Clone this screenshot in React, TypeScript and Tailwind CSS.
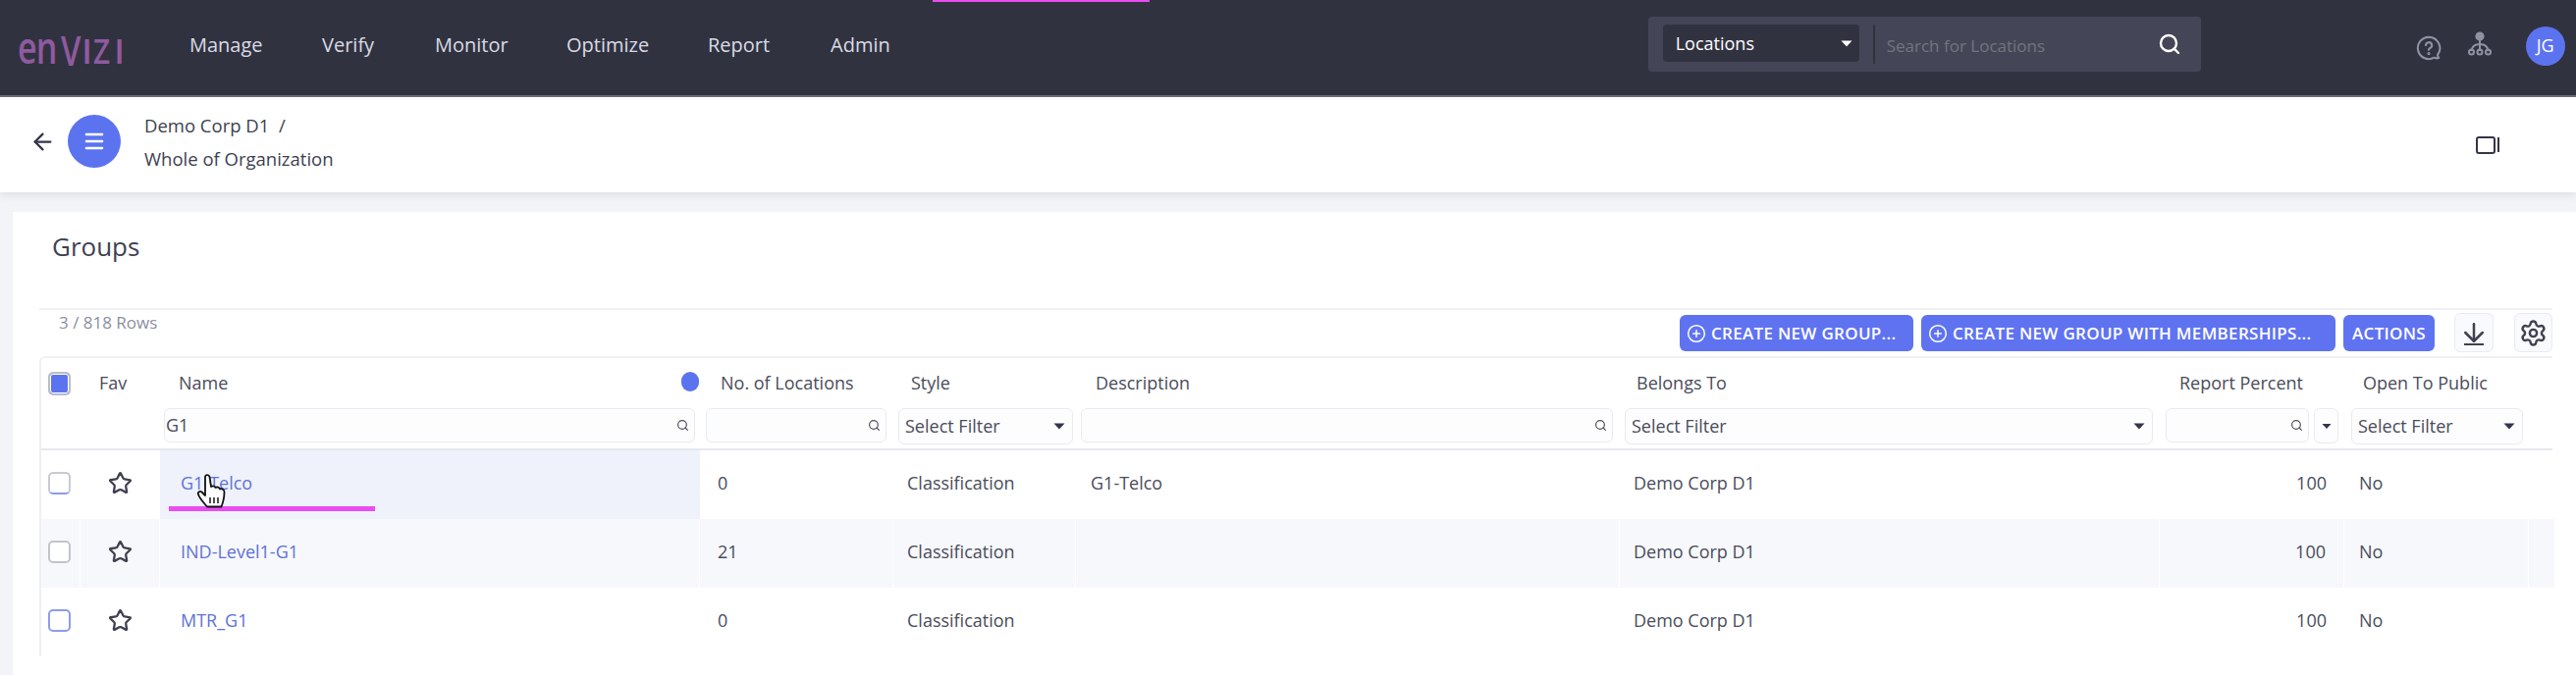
import { ArrowLeft, ArrowDown, CirclePlus, Menu, Search, Settings, Star } from "lucide-react";

const font = { fontFamily: '"Open Sans", "Noto Sans", sans-serif' };
const gridCols = "grid grid-cols-[40px_81px_550px_197px_186px_554px_550px_188px_188px_26px]";

function Caret({ className = "" }: { className?: string }) {
  return (
    <svg width="12" height="7" viewBox="0 0 12 7" className={className}>
      <path d="M0.5 0.5h11L6 6.5z" fill="currentColor" />
    </svg>
  );
}

function TextFilter({ value, className }: { value?: string; className: string }) {
  return (
    <div className={`h-[35px] rounded-md border border-[#e9ebf2] bg-[#fdfdfe] flex items-center justify-between pr-[5px] ${className}`}>
      <span className="text-[18px] text-[#4a4c5a] pl-[1px]">{value}</span>
      <Search size={13} strokeWidth={2.2} className="text-[#4d4f5e]" />
    </div>
  );
}

function SelectFilter({ className }: { className: string }) {
  return (
    <div className={`h-[37px] rounded-md border border-[#e9ebf2] bg-[#fdfdfe] flex items-center justify-between pl-[6px] pr-[7px] ${className}`}>
      <span className="text-[18px] text-[#4a4c5a]">Select Filter</span>
      <Caret className="text-[#33354a]" />
    </div>
  );
}

function HeadBtn({ children, className }: { children: React.ReactNode; className: string }) {
  return (
    <div className={`h-[37px] rounded-md bg-[#5f73f1] text-white flex items-center font-semibold text-[17px] tracking-[0.3px] whitespace-nowrap ${className}`}>
      {children}
    </div>
  );
}

function Row({ name, count, desc, striped, active, box }: { name: string; count: string; desc?: string; striped?: boolean; active?: boolean; box: string }) {
  const bg = striped ? "bg-[#f7f8fc]" : "bg-white";
  const sep = striped ? "border-r border-white pb-[3px]" : "pb-[3px]";
  return (
    <div className={`${gridCols} h-[70px] items-stretch text-[18px] text-[#4a4c5a]`}>
      <div className={`${bg} ${sep} flex items-center pl-[7px]`}>
        <div className={`w-[23px] h-[23px] rounded-[5px] border-2 bg-white ${box}`} />
      </div>
      <div className={`${bg} ${sep} flex items-center pl-[28px]`}>
        <Star size={25} strokeWidth={2.2} className="text-[#3f4150]" />
      </div>
      <div className={`${active ? "bg-[#eff2fb]" : bg} ${sep} flex items-center pl-[21px] text-[#6073d6]`}>{name}</div>
      <div className={`${bg} ${sep} flex items-center pl-[18px]`}>{count}</div>
      <div className={`${bg} ${sep} flex items-center pl-[14px]`}>Classification</div>
      <div className={`${bg} ${sep} flex items-center pl-[15px]`}>{desc}</div>
      <div className={`${bg} ${sep} flex items-center pl-[14px]`}>Demo Corp D1</div>
      <div className={`${bg} ${sep} flex items-center justify-end pr-[18px]`}>100</div>
      <div className={`${bg} ${sep} flex items-center pl-[15px]`}>No</div>
      <div className={bg} />
    </div>
  );
}

export default function App() {
  return (
    <div style={font} className="relative w-full h-[688px] overflow-hidden bg-[#f3f4f7] flex flex-col">
      {/* top nav */}
      <header className="h-[99px] shrink-0 bg-[#31323f] border-b-2 border-[#6e6f7b] flex items-center text-[#d8dbe6]">
        <div className="w-[193px] shrink-0 pl-[18px] flex items-baseline text-[#8f5a9f] leading-none -mt-[4px]">
          <span className="text-[46px] font-semibold origin-left scale-x-[0.74] w-[44px] tracking-[-1px]">en</span>
          <span className="text-[41px] font-semibold origin-left scale-x-[0.8] w-[21px] relative top-[2px]">V</span>
          <span className="text-[35px] font-semibold w-[11px] text-center">I</span>
          <span className="text-[35px] font-semibold origin-left scale-x-[0.85] w-[21px] ml-[1px]">Z</span>
          <span className="text-[35px] font-semibold w-[11px] text-center">I</span>
        </div>
        <nav className="flex items-center text-[20px] font-medium -mt-[5px]">
          <span className="w-[135px]">Manage</span>
          <span className="w-[115px]">Verify</span>
          <span className="w-[134px]">Monitor</span>
          <span className="w-[144px]">Optimize</span>
          <span className="w-[125px]">Report</span>
          <span>Admin</span>
        </nav>
        <div className="ml-[772px] w-[563px] h-[56px] -mt-[7px] rounded-[4px] bg-[#444657] flex items-center pl-[15px] pr-[20px]">
          <div className="w-[200px] h-[38px] -mt-[2px] rounded-[4px] bg-[#31323f] flex items-center justify-between pl-[13px] pr-[7px] text-white text-[18px]">
            <span>Locations</span>
            <Caret className="text-white" />
          </div>
          <div className="w-[2px] h-[40px] bg-[#31323f] ml-[14px]" />
          <span className="ml-[12px] mt-[4px] text-[17px] text-[#73747f] flex-1">Search for Locations</span>
          <Search size={24} strokeWidth={2.4} className="text-white" />
        </div>
        <div className="ml-[219px] w-[26px] h-[26px] flex items-center justify-center">
          <svg width="28" height="28" viewBox="0 0 28 28" fill="none" stroke="#8e92a3" strokeWidth="2.2" strokeLinecap="round" strokeLinejoin="round">
            <path d="M14 2a12 12 0 1 0 6 22.4c1.6.9 3.6.9 5 .4-1-1-1.4-2.2-1.2-3.6A12 12 0 0 0 14 2z" />
            <path d="M10.8 11a3.3 3.3 0 1 1 4.6 3c-.9.5-1.4 1-1.4 2" />
            <circle cx="14" cy="20" r=".6" fill="#8e92a3" />
          </svg>
        </div>
        <div className="ml-[26px] -mt-[8px]">
          <svg width="26" height="26" viewBox="0 0 26 26" fill="none" stroke="#8e92a3" strokeWidth="2">
            <circle cx="13" cy="5" r="3.6" fill="#8e92a3" />
            <path d="M13 8v12M13 13c-4 0-8 1.5-8.500 7M13 13c4 0 8 1.500 8.500 7" />
            <circle cx="4.500" cy="21" r="2.500" />
            <circle cx="13" cy="21" r="2.500" />
            <circle cx="21.500" cy="21" r="2.500" />
          </svg>
        </div>
        <div className="ml-[34px] w-[40px] h-[40px] -mt-[4px] rounded-full bg-[#5c73f0] text-white text-[18px] flex items-center justify-center">JG</div>
      </header>

      {/* breadcrumb bar */}
      <div className="h-[97px] shrink-0 bg-white shadow-[0_3px_8px_rgba(40,40,60,0.10)] relative flex items-center text-[#3d3f50] pl-[30px] pr-[78px]">
        <ArrowLeft size={27} strokeWidth={2} className="text-[#33354a] -mt-[7px]" />
        <div className="ml-[12px] -mt-[7px] w-[54px] h-[54px] rounded-full bg-[#5c73f0] flex items-center justify-center">
          <Menu size={24} strokeWidth={2.6} className="text-white" />
        </div>
        <div className="ml-[24px] flex flex-col gap-[11px] text-[18.5px] leading-[23px] pb-[7px]">
          <span className="whitespace-pre">Demo Corp D1  /</span>
          <span>Whole of Organization</span>
        </div>
        <div className="ml-auto flex items-center gap-[2px]">
          <div className="w-[20px] h-[18px] rounded-[3px] border-2 border-[#33354a]" />
          <div className="w-[2px] h-[15px] bg-[#33354a]" />
        </div>
      </div>

      {/* card */}
      <main className="flex-1 mt-[20px] ml-[13px] bg-white pl-[27px] pr-[24px] min-h-0">
        <h1 className="h-[98px] pt-[18px] pl-[13px] text-[26px] leading-[34px] text-[#3f4150]">Groups</h1>
        <div className="h-[49px] border-t-2 border-[#eef0f5] flex items-start">
          <span className="pl-[20px] pt-[2px] text-[17px] leading-[22px] text-[#8b8f9f]">3 / 818 Rows</span>
          <div className="ml-auto flex items-start pt-[5px]">
            <HeadBtn className="w-[238px] pl-[7px] gap-[5px]">
              <CirclePlus size={20} strokeWidth={1.8} />
              CREATE NEW GROUP...
            </HeadBtn>
            <HeadBtn className="ml-[8px] w-[422px] pl-[7px] gap-[5px]">
              <CirclePlus size={20} strokeWidth={1.8} />
              CREATE NEW GROUP WITH MEMBERSHIPS...
            </HeadBtn>
            <HeadBtn className="ml-[8px] w-[93px] justify-center">ACTIONS</HeadBtn>
            <div className="ml-[20px] -mt-[2px] w-[40px] h-[40px] rounded-md border border-[#e9ebf2] bg-[#f9fafd] flex flex-col items-center justify-center text-[#3f4150]">
              <ArrowDown size={30} strokeWidth={2} className="-mb-[4px] -mt-[2px]" />
              <div className="w-[20px] h-[2px] bg-[#3f4150]" />
            </div>
            <div className="ml-[21px] -mt-[2px] w-[39px] h-[40px] rounded-md border border-[#e9ebf2] bg-[#f9fafd] flex items-center justify-center text-[#3f4150]">
              <Settings size={29} strokeWidth={2} />
            </div>
          </div>
        </div>

        <div className="border-t-2 border-l-2 border-[#eef0f5] rounded-tl-md">
          <div className="h-[94px] border-b-2 border-[#e6e8ef] text-[18px] text-[#4a4c5a]">
            <div className={`${gridCols} h-[51px] items-center`}>
              <div className="pl-[7px]">
                <div className="w-[23px] h-[24px] rounded-[5px] border-2 border-[#b9bcc9] bg-[#5c73f0] shadow-[inset_0_0_0_1px_#fff]" />
              </div>
              <div className="pl-[19px]">Fav</div>
              <div className="pl-[19px] flex items-center justify-between pr-[1px]">
                <span>Name</span>
                <div className="w-[18px] h-[20px] rounded-full bg-[#5c73f0] mb-[3px]" />
              </div>
              <div className="pl-[21px]">No. of Locations</div>
              <div className="pl-[18px]">Style</div>
              <div className="pl-[20px]">Description</div>
              <div className="pl-[17px]">Belongs To</div>
              <div className="pl-[20px]">Report Percent</div>
              <div className="pl-[19px] whitespace-nowrap">Open To Public</div>
              <div />
            </div>
            <div className={`${gridCols} h-[39px] items-start`}>
              <div />
              <div />
              <div className="pl-[4px]"><TextFilter value="G1" className="w-[541px]" /></div>
              <div className="pl-[6px]"><TextFilter className="w-[184px]" /></div>
              <div className="pl-[5px]"><SelectFilter className="w-[178px]" /></div>
              <div className="pl-[5px]"><TextFilter className="w-[542px]" /></div>
              <div className="pl-[5px]"><SelectFilter className="w-[538px]" /></div>
              <div className="pl-[6px] flex gap-[5px]">
                <TextFilter className="w-[146px] shrink-0" />
                <div className="w-[25px] h-[36px] shrink-0 rounded-md border border-[#e9ebf2] bg-[#fdfdfe] flex items-center justify-center text-[#33354a]">
                  <Caret className="w-[10px]" />
                </div>
              </div>
              <div className="pl-[7px]"><SelectFilter className="w-[175px]" /></div>
              <div />
            </div>
          </div>
          <Row name="G1-Telco" count="0" desc="G1-Telco" active box="border-[#c7cad6] border-b-[#8d9cec]" />
          <Row name="IND-Level1-G1" count="21" striped box="border-[#c2c4cc]" />
          <Row name="MTR_G1" count="0" box="border-[#8d9cec]" />
        </div>
      </main>

      {/* annotations */}
      <div className="absolute left-[950px] top-0 w-[221px] h-[2px] bg-[#e94df0]" />
      <div className="absolute left-[172px] top-[516px] w-[210px] h-[5px] bg-[#ea4cf0]" />
      <svg className="absolute left-[200px] top-[483px]" width="34" height="36" viewBox="0 0 34 36">
        <path d="M9 3c0-2.500 4-2.500 4.500 0l1.500 10c2-1 4-.500 4.500 1 1.500-1 4-.500 4.500 1.500 2-.800 4.500.500 4.500 3 0 6-1 10-3 15H11C8 30 4 26 2 21c-1-2 1.500-4 3.500-2.500L9 22z" fill="#fff" stroke="#111" strokeWidth="1.800" strokeLinejoin="round" />
        <path d="M14 24v6M18 24v6M22 24v6" stroke="#222" strokeWidth="1.600" />
      </svg>
    </div>
  );
}
